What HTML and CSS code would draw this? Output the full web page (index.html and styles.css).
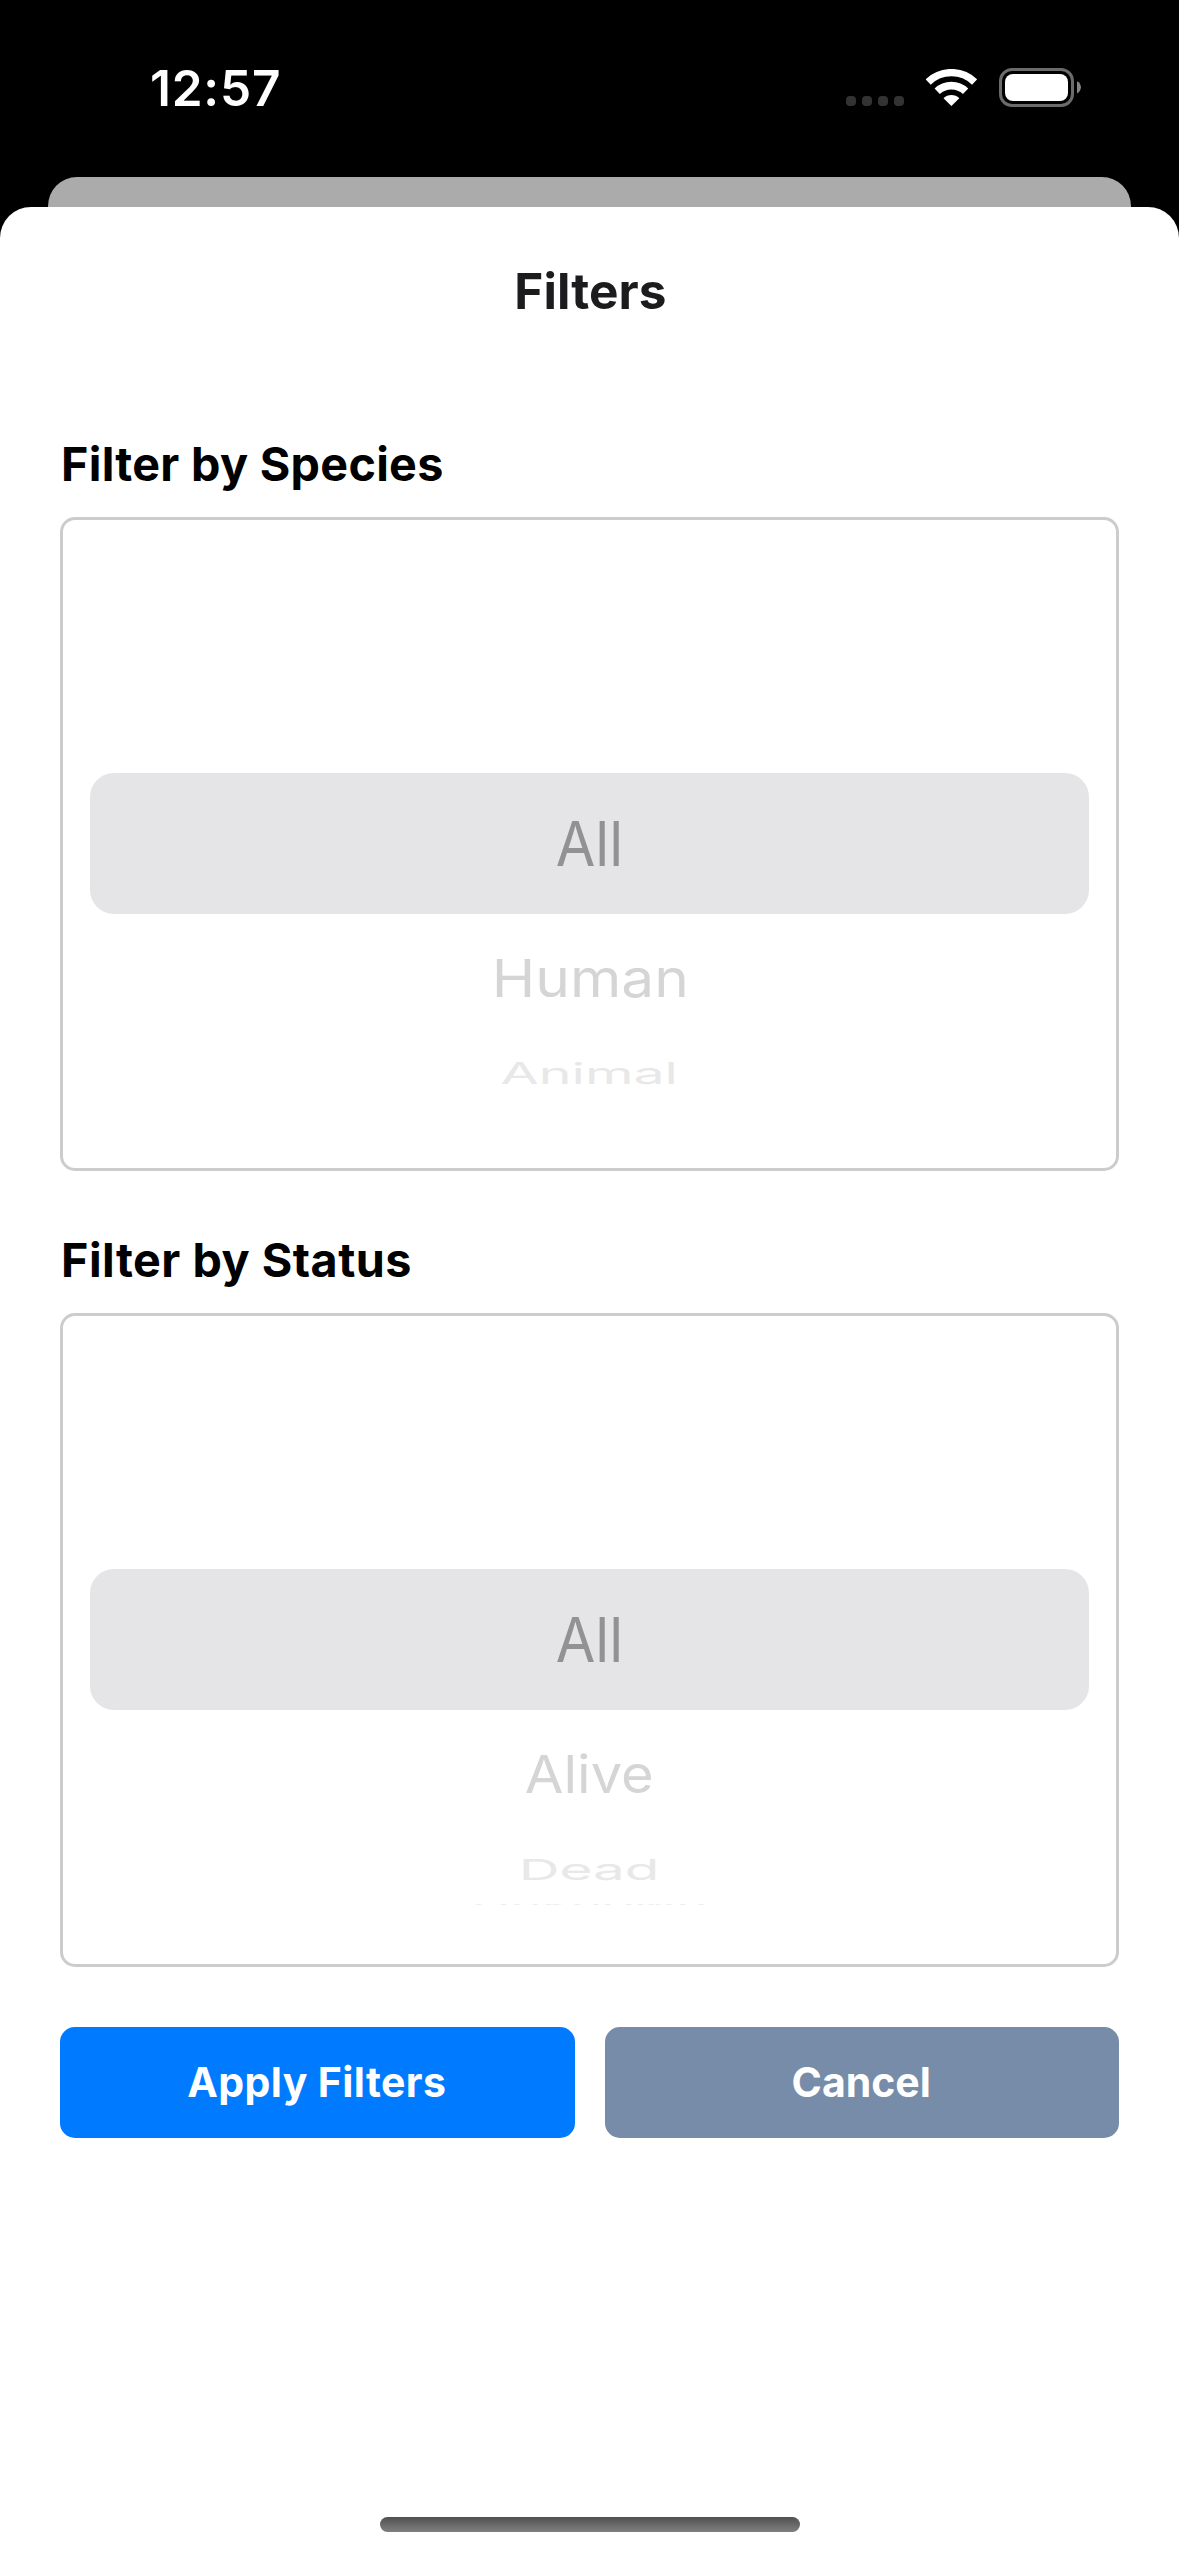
FILE: index.html
```
<!DOCTYPE html>
<html lang="en">
<head>
  <meta charset="utf-8">
  <title>Filters</title>
  <link rel="stylesheet" href="styles.css">
</head>
<body>
  <div class="screen">
    <header class="status-bar">
      <span class="time">12:57</span>
      <div class="indicators">
        <div class="cellular"><i class="dot"></i><i class="dot"></i><i class="dot"></i><i class="dot"></i></div>
        <svg class="wifi" viewBox="0 0 51 37" aria-hidden="true">
          <g fill="none" stroke="#fff">
            <path stroke-width="7.4" d="M2.2 13A33.4 33.4 0 0 1 48.6 13"/>
            <path stroke-width="7.6" d="M11.2 22.3A20.5 20.5 0 0 1 39.6 22.3"/>
          </g>
          <path fill="#fff" d="M25.4 37L17.5 29.2A11.5 11.5 0 0 1 33.3 29.2Z"/>
        </svg>
        <svg class="battery" viewBox="0 0 82 39" aria-hidden="true">
          <rect x="1.5" y="1.5" width="72" height="36" rx="11.5" fill="none" stroke="#6b6b6b" stroke-width="3"/>
          <rect x="6" y="6" width="63" height="27" rx="8" fill="#fff"/>
          <path d="M78 13.2C83.2 15.6 83.2 23 78 25.4Z" fill="#858585"/>
        </svg>
      </div>
    </header>
    <div class="back-card"></div>
    <main class="sheet">
      <h1 class="title">Filters</h1>

      <section class="filter">
        <h2 class="label">Filter by Species</h2>
        <div class="picker">
          <div class="row selected"><span class="item">All</span></div>
          <div class="row next"><span class="item">Human</span></div>
          <div class="row far"><span class="item">Animal</span></div>
        </div>
      </section>

      <section class="filter">
        <h2 class="label label-status">Filter by Status</h2>
        <div class="picker">
          <div class="row selected"><span class="item">All</span></div>
          <div class="row next"><span class="item item-alive">Alive</span></div>
          <div class="row far"><span class="item item-dead">Dead</span></div>
          <div class="row edge"><span class="item">Unknown</span></div>
        </div>
      </section>

      <div class="actions">
        <button class="button apply" type="button">Apply Filters</button>
        <button class="button cancel" type="button">Cancel</button>
      </div>

      <div class="home-indicator"></div>
    </main>
  </div>
</body>
</html>
```
FILE: styles.css
```
* {
  box-sizing: border-box;
}

body {
  margin: 0;
  background: #000;
  font-family: Inter, "Liberation Sans", sans-serif;
}

.screen {
  display: flex;
  flex-direction: column;
  width: 1179px;
  height: 2556px;
  overflow: hidden;
  background: #000;
}

.status-bar {
  display: flex;
  flex: none;
  justify-content: space-between;
  align-items: flex-start;
  height: 177px;
  padding: 58px 98px 0 150px;
  color: #fff;
}

.time {
  font-size: 49.5px;
  font-weight: 600;
  line-height: 60px;
  letter-spacing: 0.8px;
}

.indicators {
  display: flex;
  align-items: flex-start;
  padding-top: 10px;
}

.cellular {
  display: flex;
  gap: 6px;
  margin: 28px 22px 0 0;
}

.dot {
  width: 10px;
  height: 10px;
  border-radius: 4px;
  background: #333;
}

.wifi {
  width: 51px;
  height: 37px;
  margin: 1px 22px 0 0;
}

.battery {
  width: 82px;
  height: 39px;
}

.back-card {
  flex: none;
  height: 30px;
  margin: 0 48px;
  border-radius: 29px 29px 0 0;
  background: #ababab;
}

.sheet {
  display: flex;
  flex: 1;
  flex-direction: column;
  padding: 54px 60px 24px;
  border-radius: 31px 31px 0 0;
  background: #fff;
}

.title {
  margin: 0 0 115px;
  padding-left: 2px;
  color: #1c1c1e;
  font-size: 49.5px;
  font-weight: 680;
  line-height: 60px;
  letter-spacing: 0.1px;
  text-align: center;
}

.filter {
  margin-bottom: 61px;
}

.filter + .filter {
  margin-bottom: 60px;
}

.label {
  margin: 0 0 25px;
  padding-left: 1px;
  color: #000;
  font-size: 46.7px;
  font-weight: 700;
  line-height: 56px;
  letter-spacing: 0.3px;
}

.label-status {
  letter-spacing: 0.5px;
}

.picker {
  height: 654px;
  padding: 253px 27px 0;
  border: 3px solid #ccc;
  border-radius: 15px;
}

.row {
  display: flex;
  justify-content: center;
  align-items: center;
}

.item {
  font-size: 62px;
  line-height: 62px;
}

.selected {
  height: 141px;
  border-radius: 24px;
  background: #e5e5e7;
  color: #929293;
}

.selected .item {
  transform: scaleX(0.925);
}

.next {
  height: 129px;
  color: #d5d5d5;
}

.next .item {
  transform: translate(1px, -1px) scale(0.945, 0.845);
}

.next .item-alive {
  transform: translateY(-1px) scale(0.904, 0.845);
}

.far {
  height: 61px;
  color: #e8e8e8;
}

.far .item {
  transform: scale(0.894, 0.472);
}

.far .item-dead {
  transform: scale(0.912, 0.467);
}

/* Sliver of the row that is turning out of sight under the wheel */
.edge {
  align-items: flex-start;
  height: 1px;
  margin-top: 4px;
  overflow: hidden;
  color: #ededed;
}

.edge .item {
  margin-top: -2px;
  transform: scale(0.854, 0.1);
  transform-origin: top;
}

.actions {
  display: grid;
  grid-template-columns: 1fr 1fr;
  gap: 30px;
}

.button {
  height: 111px;
  padding: 0 1px 2px 0;
  border: 0;
  border-radius: 15px;
  color: #fff;
  font-family: inherit;
  font-size: 41px;
  font-weight: 700;
  line-height: 50px;
}

.apply {
  background: #007aff;
  letter-spacing: 0.4px;
}

.cancel {
  background: #778ca9;
}

.home-indicator {
  width: 420px;
  height: 15px;
  margin: auto auto 0;
  border-radius: 8px;
  background: linear-gradient(#505050, #808080);
}
```
